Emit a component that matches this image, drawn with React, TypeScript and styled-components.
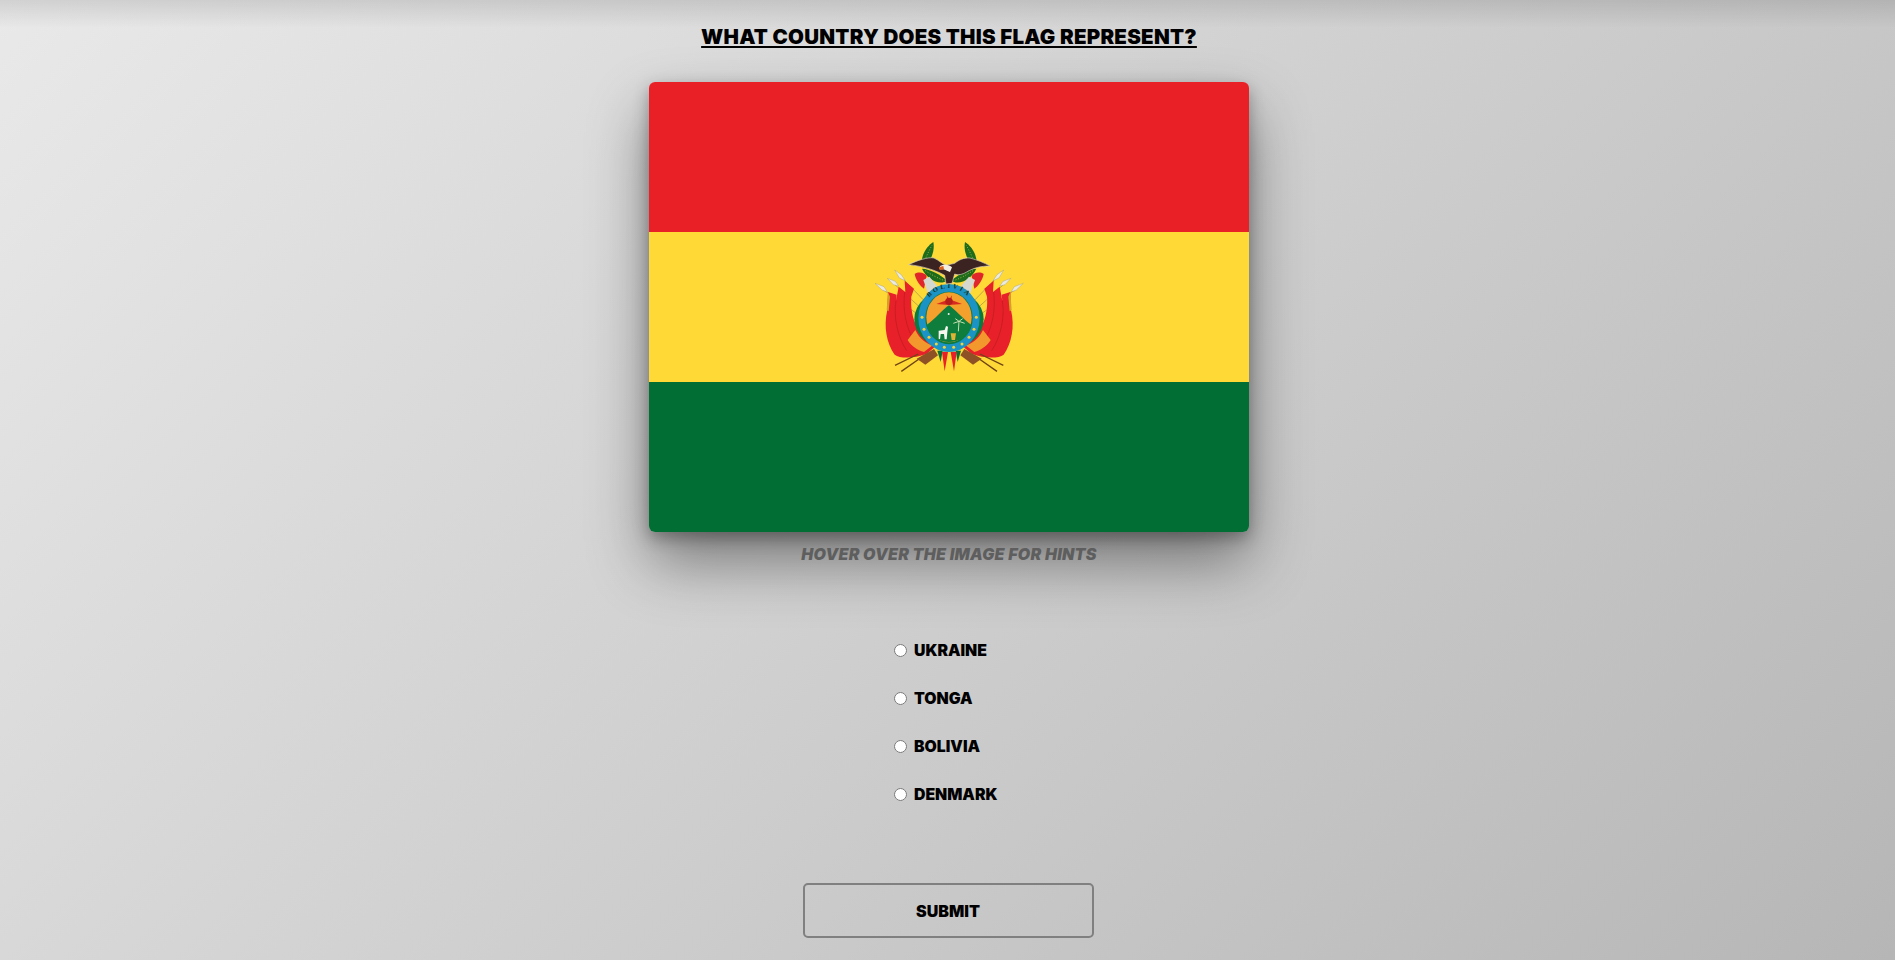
import React, { FC } from "react";
import styled, { createGlobalStyle } from "styled-components";

const countries = ["Ukraine", "Tonga", "Bolivia", "Denmark"];

const ringStars = [
  [186, 262], [192, 298], [207, 322], [229, 342], [253, 352],
  [281, 352], [306, 342], [327, 322], [342, 298], [349, 262],
];

const GlobalStyle = createGlobalStyle`
  html, body {
    margin: 0;
    height: 100%;
  }
  body {
    font-family: "Inter", "DejaVu Sans", sans-serif;
    background: #ccc;
  }
`;

// half of the arms, drawn once and mirrored around x=267
const ArmsSide: FC = () => (
  <>
    <path d="M60 172 L190 265 M98 158 L200 250 M118 135 L205 225" stroke="#a08c50" strokeWidth="2" fill="none" />
    <path d="M45 160 L72 170 L82 186 L66 180 Z M82 145 L106 154 L116 168 L100 164 Z M104 120 L124 134 L136 152 L118 144 Z" fill="#ecebe2" stroke="#8d8d80" strokeWidth="1" />
    <path d="M84 186 L110 194 L108 212 L116 170 L136 186 L134 152 L162 176 L154 200 C150 250 165 310 225 350 L200 372 C160 386 120 386 104 374 C80 340 70 290 82 240 Z" fill="#e8202a" />
    <path d="M108 212 C100 260 112 320 140 362 M134 186 C128 240 136 290 166 340" stroke="#b81c1c" strokeWidth="2" fill="none" />
    <path d="M84 186 L80 240 L86 244 L90 200 Z" fill="#d2a126" />
    <path d="M143 330 L166 300 C178 325 196 340 218 346 L192 366 C172 360 154 348 143 330 Z" fill="#f2982c" />
    <path d="M105 406 L175 372 M124 424 L190 378" stroke="#6e4418" strokeWidth="4" fill="none" />
    <path d="M170 386 L222 357 L234 376 L196 404 Z" fill="#8e5126" />
    <path d="M232 362 L242 396 L248 362 Z" fill="#0e6e36" />
    <path d="M186 112 C180 80 198 50 220 36 C226 66 210 100 186 112 Z" fill="#1d6b1c" />
    <path d="M190 106 C196 84 206 64 216 46" stroke="#a4b23a" strokeWidth="3" strokeDasharray="3 5" fill="none" />
    <path d="M186 116 C210 116 244 136 262 152 C236 168 200 146 186 116 Z" fill="#1d6b1c" />
    <path d="M196 122 C214 134 236 146 254 152" stroke="#a4b23a" strokeWidth="3" strokeDasharray="3 5" fill="none" />
    <path d="M164 132 C176 124 194 128 200 138 L192 176 C180 168 168 152 164 132 Z" fill="#e0262b" />
    <path d="M190 150 L208 140 L232 168 L204 190 Z" fill="#d5d8cf" />
  </>
);

const CoatOfArms: FC = () => (
  <CoatSvg viewBox="-3 6 540 444" aria-hidden="true">
    <ArmsSide />
    <g transform="matrix(-1 0 0 1 535 0)">
      <ArmsSide />
    </g>
    <path d="M246 366 L254 424 L264 366 Z M272 366 L282 424 L290 366 Z" fill="#e8202a" />
    {/* shield */}
    <ellipse cx="267" cy="268" rx="104" ry="88" fill="#0b7a3e" />
    <ellipse cx="267" cy="264" rx="92" ry="102" fill="#1b93c4" />
    <ellipse cx="267" cy="264" rx="71" ry="79" fill="#0b7a3e" />
    <ellipse cx="267" cy="262" rx="68" ry="75" fill="#f4a02d" />
    <path id="ringPath" d="M186 264 A81 90 0 0 1 348 264" fill="none" />
    <RingText>
      <textPath href="#ringPath" startOffset="50%" textAnchor="middle">
        BOLIVIA
      </textPath>
    </RingText>
    {ringStars.map(([x, y]) => (
      <circle key={`${x}-${y}`} cx={x} cy={y} r="4.5" fill="#f4d23a" />
    ))}
    <path d="M229 222 L262 210 L260 196 L268 208 L276 196 L274 210 L306 222 L276 224 L258 224 Z" fill="#d92a20" />
    <circle cx="267" cy="214" r="11" fill="#b51e1a" />
    <path d="M199 286 C225 268 250 236 267 226 C285 238 310 268 335 286 C328 318 300 336 267 336 C234 336 206 318 199 286 Z" fill="#0f7d3c" />
    <path d="M236 326 L236 302 L254 300 L258 288 L264 290 L262 306 L260 328 L254 328 L252 312 L242 312 L240 328 Z" fill="#f7f7f2" />
    <path d="M295 304 L297 274 M297 274 L280 280 M297 274 L314 280 M297 274 L286 266 M297 274 L308 266" stroke="#c8e0b0" strokeWidth="3" fill="none" />
    <path d="M272 310 L288 310 L285 330 L275 330 Z" fill="#e3b432" />
    <circle cx="266" cy="252" r="3" fill="#eee" />
    {/* condor */}
    <path d="M146 104 C170 92 205 80 222 84 C238 92 248 102 258 106 L284 100 C296 90 312 82 330 84 C352 90 372 98 390 108 C362 108 340 114 320 126 C306 134 294 136 284 132 L276 160 L258 162 L254 136 C240 128 226 122 206 116 C186 110 166 106 146 104 Z" fill="#3a2320" stroke="#d4cfc4" strokeWidth="2" />
    <path d="M240 108 C250 102 268 102 276 112 L270 126 C262 124 256 120 250 118 L238 118 Z" fill="#f4eee2" />
    <path d="M236 112 L250 108 L252 118 L240 120 Z" fill="#d9601e" />
  </CoatSvg>
);

const App: FC = () => (
  <Page>
    <GlobalStyle />
    <Title>What country does this flag represent?</Title>
    <Flag>
      <RedBand />
      <YellowBand>
        <CoatOfArms />
      </YellowBand>
      <GreenBand />
    </Flag>
    <Hint>Hover over the image for hints</Hint>
    <Options>
      {countries.map((country) => (
        <Option key={country}>
          <Radio type="radio" name="country" />
          <OptionText>{country}</OptionText>
        </Option>
      ))}
    </Options>
    <SubmitButton type="button">Submit</SubmitButton>
  </Page>
);

export default App;

const Page = styled.div`
  box-sizing: border-box;
  height: 960px;
  padding-left: 3px;
  overflow: hidden;
  display: flex;
  flex-direction: column;
  align-items: center;
  background: linear-gradient(to bottom, rgba(0, 0, 0, 0.1), transparent 28px),
    linear-gradient(135deg, #e9e9e9 0%, #b6b6b6 100%);
  color: #000;
  text-transform: uppercase;
`;

const Title = styled.h1`
  margin: 24px 0 0;
  font-size: 20.5px;
  line-height: 26px;
  font-weight: 900;
  letter-spacing: 0.26px;
  white-space: nowrap;
  text-decoration: underline;
`;

const Flag = styled.div`
  width: 600px;
  height: 450px;
  margin-top: 32px;
  border-radius: 6px;
  overflow: hidden;
  flex-shrink: 0;
  display: flex;
  flex-direction: column;
  box-shadow: 0 6px 16px rgba(0, 0, 0, 0.3), 0 30px 60px rgba(0, 0, 0, 0.42);
`;

const RedBand = styled.div`
  height: 150px;
  background: #ea2027;
`;

const YellowBand = styled.div`
  height: 150px;
  background: #ffd935;
  display: flex;
  justify-content: center;
`;

const GreenBand = styled.div`
  height: 150px;
  background: #016f33;
`;

const CoatSvg = styled.svg`
  width: 180px;
  height: 148px;
`;

const RingText = styled.text`
  font-family: "Liberation Serif", serif;
  font-size: 20px;
  font-weight: 700;
  letter-spacing: 7px;
  fill: #12351f;
`;

const Hint = styled.p`
  margin: 12px 0 0;
  font-size: 16px;
  line-height: 20px;
  font-weight: 900;
  font-style: italic;
  letter-spacing: 0.25px;
  white-space: nowrap;
  color: #5e5e5e;
`;

const Options = styled.div`
  display: flex;
  flex-direction: column;
  gap: 24px;
  margin-top: 74px;
  width: 110px;
`;

const Option = styled.label`
  display: flex;
  align-items: center;
  height: 24px;
  white-space: nowrap;
`;

const Radio = styled.input`
  width: 13px;
  height: 13px;
  margin: 0 7px 0 0;
`;

const OptionText = styled.span`
  font-size: 15.8px;
  font-weight: 900;
`;

const SubmitButton = styled.button`
  width: 291px;
  height: 55px;
  margin: 77px 0 0 -2px;
  flex-shrink: 0;
  background: transparent;
  border: 2px solid #808080;
  border-radius: 5px;
  font-family: inherit;
  font-size: 16px;
  font-weight: 900;
  text-transform: uppercase;
  color: #000;
`;
